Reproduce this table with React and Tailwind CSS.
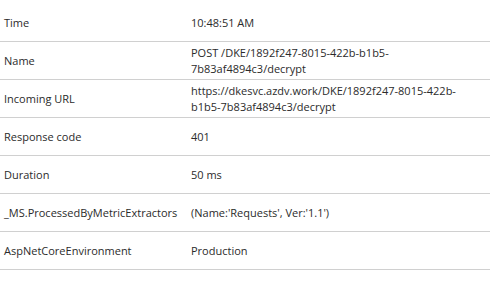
const rows = [
  ["Time", "10:48:51 AM"],
  ["Name", "POST /DKE/1892f247-8015-422b-b1b5-7b83af4894c3/decrypt"],
  ["Incoming URL", "https://dkesvc.azdv.work/DKE/1892f247-8015-422b-b1b5-7b83af4894c3/decrypt"],
  ["Response code", "401"],
  ["Duration", "50 ms"],
  ["_MS.ProcessedByMetricExtractors", "(Name:'Requests', Ver:'1.1')"],
  ["AspNetCoreEnvironment", "Production"],
];

export default function App() {
  return (
    <div className="w-[497px] h-[288px] bg-white pt-1 text-[11px] leading-[16px] text-[#2b2b2b]" style={{ fontFamily: '"Segoe UI", "Open Sans", sans-serif' }}>
      <div className="w-[490px]">
        {rows.map(([label, value]) => (
          <div key={label} className="flex items-center h-[38px] border-b border-[#d0d0d0]">
            <div className="w-[187px] shrink-0 pl-1">{label}</div>
            <div className="w-[295px] pl-1">{value}</div>
          </div>
        ))}
      </div>
    </div>
  );
}
